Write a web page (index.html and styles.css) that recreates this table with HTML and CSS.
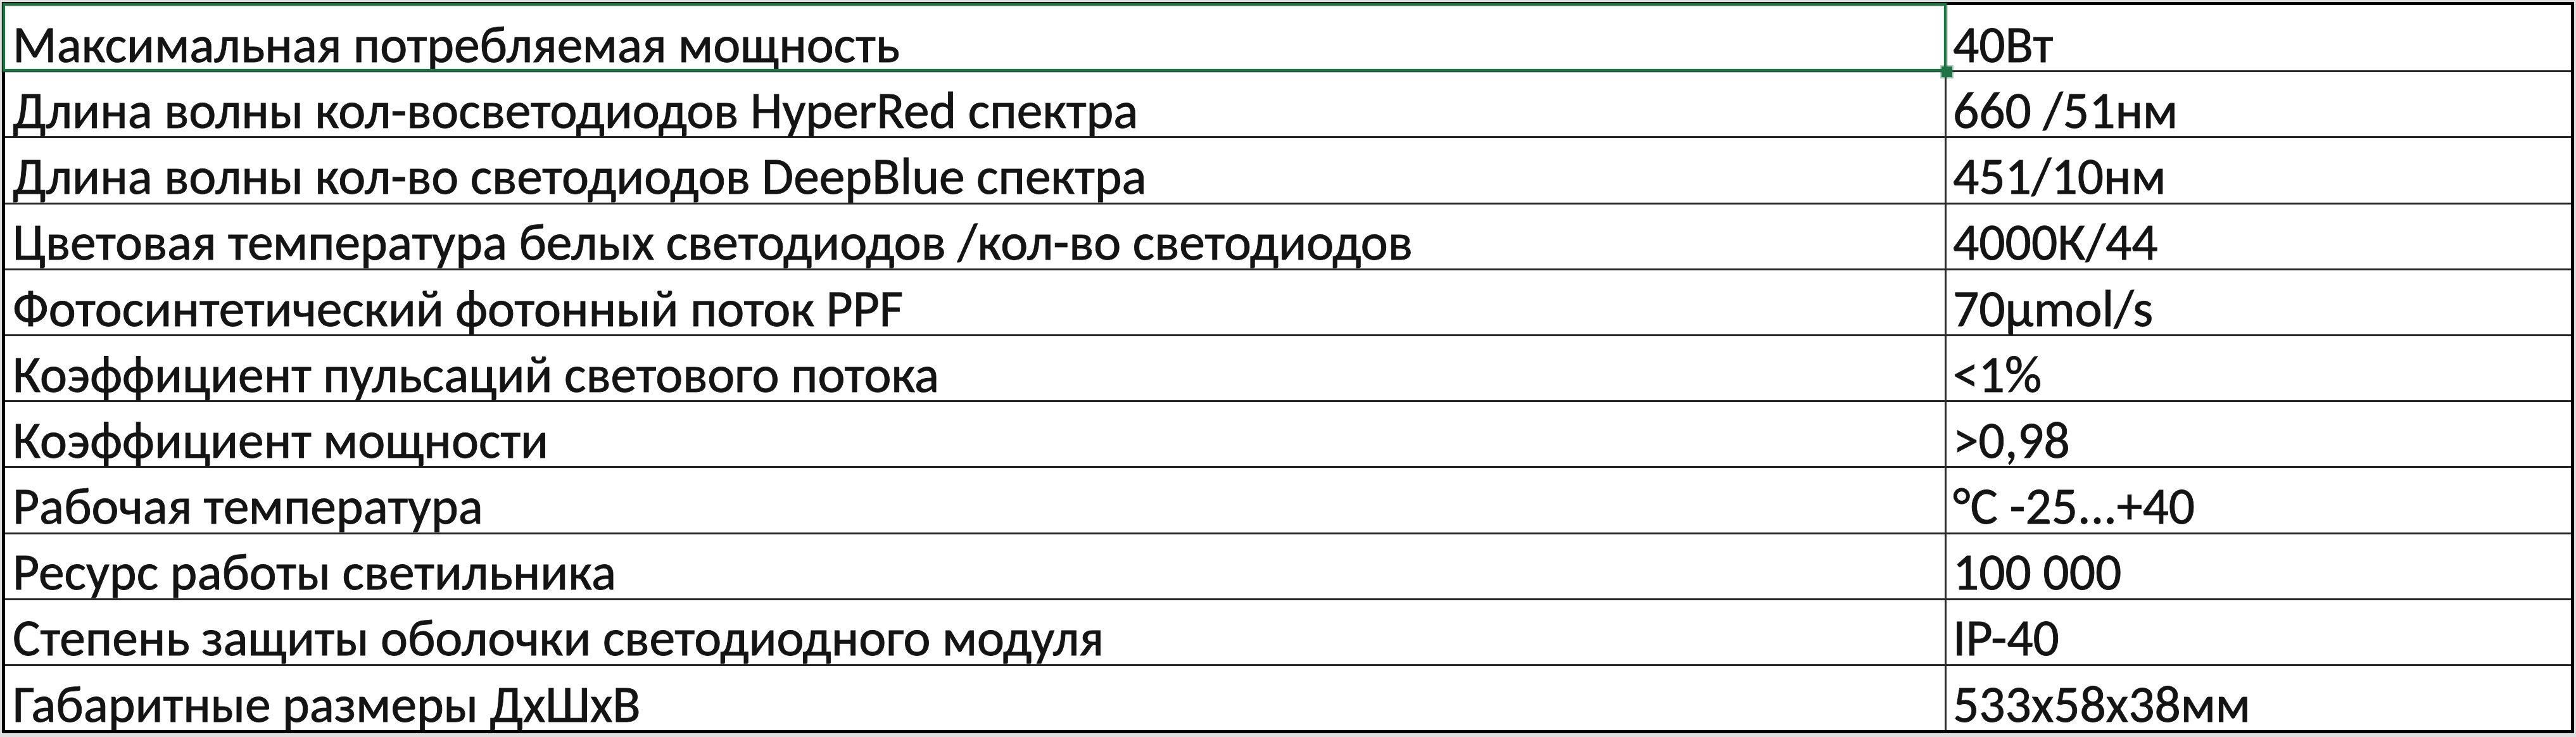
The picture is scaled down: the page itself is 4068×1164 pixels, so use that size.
FILE: index.html
```html
<!DOCTYPE html>
<html lang="ru">
<head>
<meta charset="utf-8">
<title>Технические характеристики</title>
<link rel="stylesheet" href="styles.css">
</head>
<body>
<div class="sheet" role="table">
  <div class="cell key selected" role="cell">Максимальная потребляемая мощность<span class="sel-frame"></span><span class="fill-handle"></span></div>
  <div class="cell val" role="cell">40Вт</div>

  <div class="cell key" role="cell">Длина волны кол-восветодиодов HyperRed спектра</div>
  <div class="cell val" role="cell">660 /51нм</div>

  <div class="cell key" role="cell">Длина волны кол-во светодиодов DeepBlue спектра</div>
  <div class="cell val" role="cell">451/10нм</div>

  <div class="cell key" role="cell">Цветовая температура белых светодиодов /кол-во светодиодов</div>
  <div class="cell val" role="cell">4000К/44</div>

  <div class="cell key" role="cell">Фотосинтетический фотонный поток PPF</div>
  <div class="cell val" role="cell">70µmol/s</div>

  <div class="cell key" role="cell">Коэффициент пульсаций светового потока</div>
  <div class="cell val" role="cell">&lt;1%</div>

  <div class="cell key" role="cell">Коэффициент мощности</div>
  <div class="cell val" role="cell">&gt;0,98</div>

  <div class="cell key" role="cell">Рабочая температура</div>
  <div class="cell val" role="cell">°C -25...+40</div>

  <div class="cell key" role="cell">Ресурс работы светильника</div>
  <div class="cell val" role="cell">100 000</div>

  <div class="cell key" role="cell">Степень защиты оболочки светодиодного модуля</div>
  <div class="cell val" role="cell">IP-40</div>

  <div class="cell key last" role="cell">Габаритные размеры ДхШхВ</div>
  <div class="cell val last" role="cell">533х58х38мм</div>
</div>
</body>
</html>
```
FILE: styles.css
```css
html, body {
  margin: 0;
  padding: 0;
  background: #dedede;
}

body {
  width: 4068px;
  height: 1164px;
  overflow: hidden;
  font-family: "Carlito", "Calibri", "Lato", sans-serif;
  color: #141414;
}

.sheet {
  box-sizing: border-box;
  margin: 3px 0 0 3px;
  width: 4062px;
  height: 1155px;
  display: grid;
  grid-template-columns: 3066px 1fr;
  grid-template-rows: 106.3px repeat(9, 104.2px) 1fr;
  border: 5px solid #000;
  background: #fff;
}

.cell {
  box-sizing: border-box;
  display: flex;
  align-items: flex-end;
  font-size: 81.5px;
  line-height: 1;
  white-space: nowrap;
  -webkit-text-stroke: 0.9px #141414;
  border-bottom: 3px solid #262626;
  background: #fff;
}

.cell.last {
  border-bottom: 0;
}

.key {
  padding-left: 12px;
  border-right: 3px solid #2e2e2e;
}

.val {
  padding-left: 10px;
}

.selected {
  position: relative;
}

.sel-frame {
  position: absolute;
  left: -4px;
  top: -3px;
  right: -3px;
  bottom: -2px;
  border: 4px solid #217346;
  box-shadow: 0 0 0 2px rgba(33, 115, 70, 0.22), inset 0 0 0 2px rgba(33, 115, 70, 0.12);
  pointer-events: none;
}

.fill-handle {
  position: absolute;
  right: -12px;
  bottom: -11px;
  width: 17px;
  height: 17px;
  background: #217346;
  box-shadow: 0 0 0 2px rgba(33, 115, 70, 0.35);
}
```
